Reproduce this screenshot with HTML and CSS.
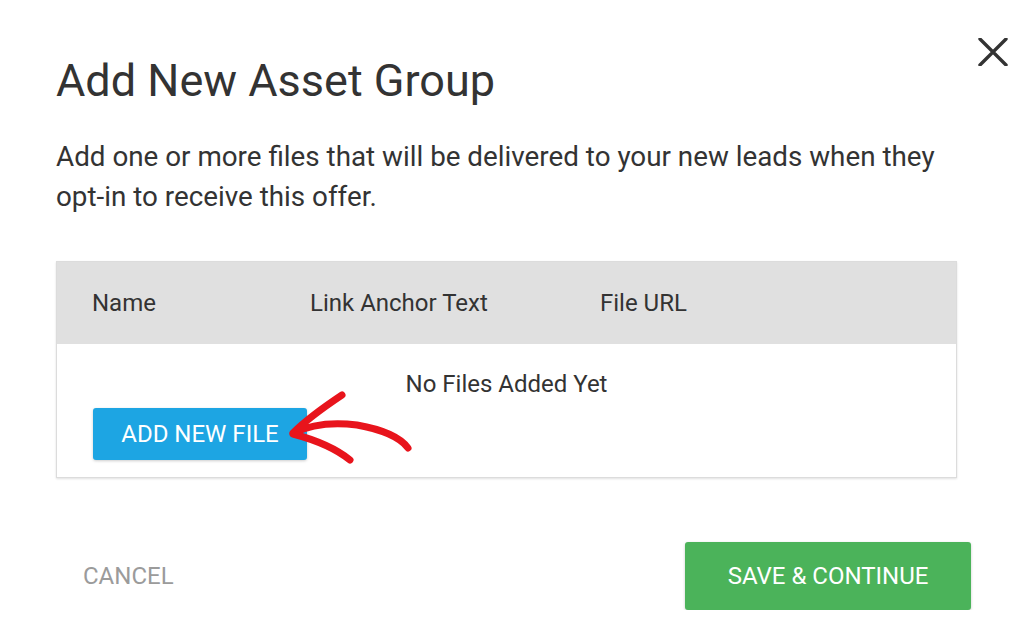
FILE: index.html
```html
<!DOCTYPE html>
<html lang="en">
<head>
    <meta charset="UTF-8">
    <meta name="viewport" content="width=device-width, initial-scale=1.0">
    <title>Add New Asset Group</title>
    <link rel="stylesheet" href="styles.css">
</head>
<body>

    <div class="modal">
        <button class="close-btn" aria-label="Close">
            <svg width="30" height="28" viewBox="0 0 30 28">
                <path d="M2 1 L28 27 M28 1 L2 27" stroke="#333" stroke-width="3.4" stroke-linecap="round"/>
            </svg>
        </button>

        <h1 class="modal-title">Add New Asset Group</h1>
        <p class="modal-desc">Add one or more files that will be delivered to your new leads when they opt-in to receive this offer.</p>

        <div class="asset-table">
            <div class="table-head">
                <span class="col-name">Name</span>
                <span class="col-anchor">Link Anchor Text</span>
                <span class="col-url">File URL</span>
            </div>
            <div class="table-body">
                <div class="empty-msg">No Files Added Yet</div>
                <button class="btn-add">ADD NEW FILE</button>
                <svg class="arrow" width="140" height="90" viewBox="0 0 140 90">
                    <path d="M70 8 C55 18 35 32 21 46 C40 37 62 35 85 38 C108 42 128 50 136 61" fill="none" stroke="#e8141c" stroke-width="7" stroke-linecap="round" stroke-linejoin="round"/>
                    <path d="M21 47 C40 52 62 60 78 73" fill="none" stroke="#e8141c" stroke-width="7" stroke-linecap="round"/>
                </svg>
            </div>
        </div>

        <div class="modal-footer">
            <button class="btn-cancel">CANCEL</button>
            <button class="btn-save">SAVE &amp; CONTINUE</button>
        </div>
    </div>

</body>
</html>
```

FILE: styles.css
```css
body {
    margin: 0;
    font-family: Roboto, 'Liberation Sans', sans-serif;
    background-color: white;
    color: #333;
}

.modal {
    position: relative;
    padding: 53px 53px 0 56px;
}

.close-btn {
    position: absolute;
    top: 38px;
    right: 16px;
    padding: 0;
    border: none;
    background: none;
    cursor: pointer;
}

.modal-title {
    margin: 0;
    font-size: 45px;
    font-weight: 400;
    line-height: 56px;
}

.modal-desc {
    margin: 28px 0 0;
    font-size: 27.8px;
    line-height: 40px;
    max-width: 890px;
}

.asset-table {
    width: 899px;
    margin-top: 44px;
    border: 1px solid #dcdcdc;
    box-shadow: 0 1px 2px rgba(0, 0, 0, 0.12);
}

.table-head {
    display: flex;
    height: 82px;
    align-items: center;
    padding-left: 35px;
    background-color: #e0e0e0;
    font-size: 24px;
}

.col-name {
    width: 218px;
}

.col-anchor {
    width: 290px;
}

.table-body {
    position: relative;
    padding: 26px 36px 17px;
}

.empty-msg {
    text-align: center;
    font-size: 24px;
    line-height: 28px;
}

.btn-add {
    display: block;
    margin-top: 10px;
    width: 214px;
    height: 52px;
    border: none;
    border-radius: 3px;
    background-color: #1da5e3;
    color: white;
    font-family: inherit;
    font-size: 24px;
    box-shadow: 0 1px 3px rgba(0, 0, 0, 0.2);
}

.arrow {
    position: absolute;
    left: 215px;
    top: 43px;
}

.modal-footer {
    display: flex;
    justify-content: space-between;
    align-items: center;
    margin-top: 64px;
}

.btn-cancel {
    padding: 0 27px;
    border: none;
    background: none;
    color: #9b9b9b;
    font-family: inherit;
    font-size: 24px;
}

.btn-save {
    width: 286px;
    height: 68px;
    border: none;
    border-radius: 3px;
    background-color: #4bb35a;
    color: white;
    font-family: inherit;
    font-size: 24px;
    box-shadow: 0 1px 3px rgba(0, 0, 0, 0.2);
}
```
